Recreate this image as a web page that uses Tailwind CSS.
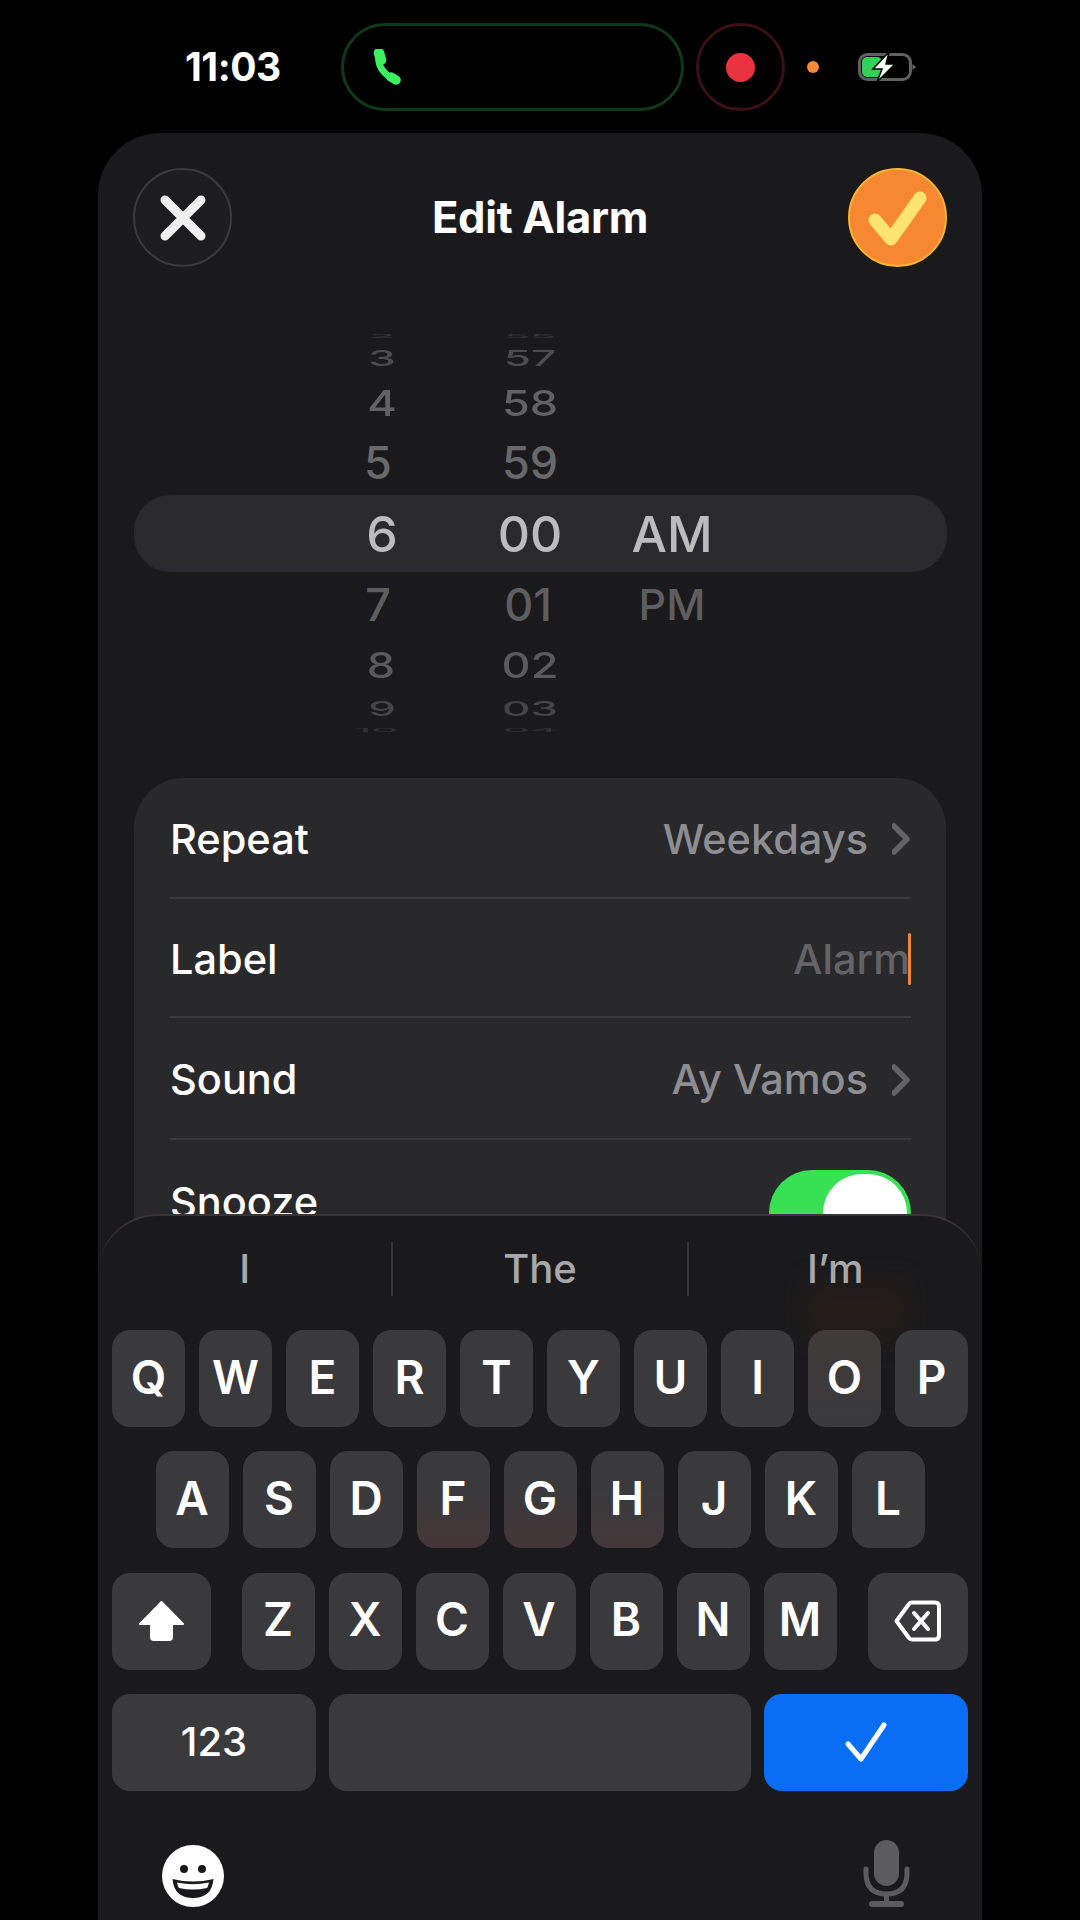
<!DOCTYPE html>
<html><head><meta charset="utf-8"><script src="https://cdn.jsdelivr.net/npm/@tailwindcss/browser@4"></script></head>
<body class="bg-black">
<div class="w-[1080px] h-[1920px] bg-black overflow-hidden flex flex-col font-[Inter,sans-serif] text-white">
  <!-- status bar -->
  <div class="h-[133px] shrink-0 flex items-start pt-[23px] pl-[185px]">
    <div class="w-[156px] h-[88px] flex items-center text-[39px] font-bold tracking-[-0.5px]">11:03</div>
    <div class="w-[343px] h-[88px] rounded-full border-[3px] border-[#0f3a18] flex items-center pl-[29px]">
      <svg width="28" height="36" viewBox="0 0 28 36"><path d="M6 4 C4 14 8 24 22 31" fill="none" stroke="#3cf060" stroke-width="6.500" stroke-linecap="round"/><path d="M6 4 L8 11" stroke="#3cf060" stroke-width="10.500" stroke-linecap="round"/><path d="M18 28 L23 31" stroke="#3cf060" stroke-width="9.500" stroke-linecap="round"/></svg>
    </div>
    <div class="ml-[12px] w-[89px] h-[88px] rounded-full border-[3px] border-[#3a1014] flex items-center justify-center"><div class="w-[29px] h-[29px] rounded-full bg-[#ea3340]"></div></div>
    <div class="ml-[22px] mt-[38px] w-[12px] h-[12px] rounded-full bg-[#f5883a]"></div>
    <svg class="ml-[39px] mt-[29px]" width="58" height="30" viewBox="0 0 58 30">
      <rect x="1.500" y="2.500" width="51" height="25" rx="8" fill="none" stroke="#606062" stroke-width="3"/>
      <rect x="4" y="5" width="20" height="20" rx="5" fill="#35d058"/>
      <path d="M54.500 12 L58 15 L54.500 18 Z" fill="#68686a"/>
      <path d="M31 0 L15 17 H24 L19 30 L37 12 H28 Z" fill="#fff" stroke="#000" stroke-width="1.500"/>
    </svg>
  </div>

  <!-- sheet -->
  <div class="relative flex-1 mx-[98px] w-[884px] bg-[#1a1a1c] rounded-t-[62px] overflow-hidden flex flex-col">
    <div class="flex items-center justify-between px-[35px] pt-[35px] shrink-0">
      <div class="w-[99px] h-[99px] rounded-full bg-[#1d1d1f] border-2 border-[#3a3a3d] flex items-center justify-center">
        <svg width="48" height="48" viewBox="0 0 48 48"><path d="M6 6 L42 42 M42 6 L6 42" stroke="#efefef" stroke-width="9" stroke-linecap="round"/></svg>
      </div>
      <div class="text-[43.500px] font-bold tracking-[-0.3px]">Edit Alarm</div>
      <div class="w-[99px] h-[99px] rounded-full bg-[#f58830] border-2 border-[#f5b52f] flex items-center justify-center">
        <svg class="shrink-0" width="99" height="99" viewBox="0 0 99 99"><path d="M27 52 L43 71 L72 30" fill="none" stroke="#fde36f" stroke-width="13" stroke-linecap="round" stroke-linejoin="round"/></svg>
      </div>
    </div>

    <!-- picker -->
    <div class="relative mt-[58px] shrink-0 h-[416px] flex flex-col font-medium">
      <div class="absolute left-[36px] right-[35px] top-[170px] h-[77px] rounded-[36px] bg-[#2a2a2e]"></div>
      <div class="relative h-[22px] flex items-center pl-[224px] text-[42px] leading-none text-[#343436]"><div class="w-[120px] text-center"><span class="inline-block scale-y-[.13]">2</span></div><div class="w-[176px] text-center"><span class="inline-block scale-y-[.13]">55</span></div></div>
      <div class="relative h-[22px] flex items-center pl-[224px] text-[44px] leading-none text-[#4c4c4e]"><div class="w-[120px] text-center"><span class="inline-block scale-y-[.5]">3</span></div><div class="w-[176px] text-center"><span class="inline-block scale-y-[.5]">57</span></div></div>
      <div class="relative h-[66px] flex items-center pl-[224px] text-[45px] leading-none text-[#626264]"><div class="w-[120px] text-center"><span class="inline-block scale-y-[.8]">4</span></div><div class="w-[176px] text-center"><span class="inline-block scale-y-[.8]">58</span></div></div>
      <div class="relative h-[54px] flex items-center pl-[224px] text-[45px] leading-none text-[#68686a]"><div class="w-[120px] pr-[8px] text-center"><span class="inline-block">5</span></div><div class="w-[176px] text-center"><span class="inline-block">59</span></div></div>
      <div class="relative h-[86px] flex items-center pl-[224px] pt-[3px] text-[50px] leading-none text-[#bcbcbe]"><div class="w-[120px] text-center"><span class="inline-block">6</span></div><div class="w-[176px] text-center"><span class="inline-block">00</span></div><div class="w-[108px] text-center"><span class="inline-block">AM</span></div></div>
      <div class="relative h-[58px] flex items-center pl-[224px] text-[45px] leading-none text-[#5e5e60]"><div class="w-[120px] pr-[8px] text-center"><span class="inline-block">7</span></div><div class="w-[176px] text-center pr-[4px]"><span class="inline-block">01</span></div><div class="w-[108px] text-center text-[43px]"><span class="inline-block">PM</span></div></div>
      <div class="relative h-[64px] flex items-center pl-[224px] text-[45px] leading-none text-[#5a5a5c]"><div class="w-[120px] pr-[2px] text-center"><span class="inline-block scale-y-[.78]">8</span></div><div class="w-[176px] text-center"><span class="inline-block scale-y-[.78]">02</span></div></div>
      <div class="relative h-[22px] flex items-center pl-[224px] text-[44px] leading-none text-[#454547]"><div class="w-[120px] text-center"><span class="inline-block scale-y-[.47]">9</span></div><div class="w-[176px] text-center"><span class="inline-block scale-y-[.47]">03</span></div></div>
      <div class="relative h-[22px] flex items-center pl-[224px] text-[42px] leading-none text-[#303032]"><div class="w-[120px] pr-[12px] text-center"><span class="inline-block scale-y-[.13]">10</span></div><div class="w-[176px] text-center"><span class="inline-block scale-y-[.13]">04</span></div></div>
    </div>

    <!-- settings card -->
    <div class="mt-[37px] mx-[36px] shrink-0 h-[600px] bg-[#29292c] rounded-[50px] pl-[36px] pr-[35px] text-[41.500px] font-medium flex flex-col">
      <div class="h-[121px] pt-[3px] shrink-0 flex items-center justify-between border-b-2 border-[#3a3a3d]">
        <span>Repeat</span>
        <span class="flex items-center gap-[24px] text-[#8e8e92]">Weekdays
          <svg width="19" height="32" viewBox="0 0 19 32"><path d="M2 3 L15 16 L2 29" fill="none" stroke="#636366" stroke-width="5.500" stroke-linecap="round" stroke-linejoin="round"/></svg>
        </span>
      </div>
      <div class="h-[119px] pt-[3px] shrink-0 flex items-center justify-between border-b-2 border-[#3a3a3d]">
        <span>Label</span>
        <span class="flex items-center text-[#636366]">Alarm<span class="-ml-[2px] w-[3px] h-[52px] rounded-full bg-[#f5862e]"></span></span>
      </div>
      <div class="h-[122px] pt-[3px] shrink-0 flex items-center justify-between border-b-2 border-[#3a3a3d]">
        <span>Sound</span>
        <span class="flex items-center gap-[24px] text-[#8e8e92]">Ay Vamos
          <svg width="19" height="32" viewBox="0 0 19 32"><path d="M2 3 L15 16 L2 29" fill="none" stroke="#636366" stroke-width="5.500" stroke-linecap="round" stroke-linejoin="round"/></svg>
        </span>
      </div>
      <div class="h-[124px] shrink-0 flex items-center justify-between">
        <span>Snooze</span>
        <div class="relative self-start mt-[30px] w-[142px] h-[86px] rounded-full bg-[#38e154]"><div class="absolute top-[4px] right-[4px] w-[84px] h-[78px] rounded-full bg-white"></div></div>
      </div>
    </div>

    <!-- keyboard -->
    <div class="absolute left-0 right-0 bottom-0 h-[706px] bg-[#1a1a1c] rounded-t-[60px] border-t-2 border-[#3a3534] overflow-hidden">
      <div class="absolute left-[704px] top-[66px] w-[108px] h-[54px] bg-[#3a2414]/30 blur-[12px]"></div>
      <div class="relative flex h-[54px] mt-[26px] text-[40px] text-[#a8a8aa] font-medium">
        <div class="flex-1 flex items-center justify-center border-r-2 border-[#333335]">I</div>
        <div class="flex-1 flex items-center justify-center border-r-2 border-[#333335]">The</div>
        <div class="flex-1 flex items-center justify-center">I’m</div>
      </div>
      <div class="relative mt-[34px] px-[14px] flex flex-col gap-[24.300px] text-[46px] font-semibold">
        <div class="flex justify-between h-[97px] [&>div]:pb-[3px]">
          <div class="w-[73px] rounded-[18px] bg-[#3a3a3c] flex items-center justify-center">Q</div>
          <div class="w-[73px] rounded-[18px] bg-[#3a3a3c] flex items-center justify-center">W</div>
          <div class="w-[73px] rounded-[18px] bg-[#3a3a3c] flex items-center justify-center">E</div>
          <div class="w-[73px] rounded-[18px] bg-[#3a3a3c] flex items-center justify-center">R</div>
          <div class="w-[73px] rounded-[18px] bg-[#3a3a3c] flex items-center justify-center">T</div>
          <div class="w-[73px] rounded-[18px] bg-[#3a3a3c] flex items-center justify-center">Y</div>
          <div class="w-[73px] rounded-[18px] bg-[#3a3a3c] flex items-center justify-center">U</div>
          <div class="w-[73px] rounded-[18px] bg-[#3a3a3c] flex items-center justify-center">I</div>
          <div class="w-[73px] rounded-[18px] bg-gradient-to-b from-[#403a3a] to-[#3a3a3c] flex items-center justify-center">O</div>
          <div class="w-[73px] rounded-[18px] bg-[#3a3a3c] flex items-center justify-center">P</div>
        </div>
        <div class="flex justify-center gap-[14px] h-[97px] [&>div]:pb-[3px]">
          <div class="w-[73px] rounded-[18px] bg-[#3a3a3c] flex items-center justify-center">A</div>
          <div class="w-[73px] rounded-[18px] bg-[#3a3a3c] flex items-center justify-center">S</div>
          <div class="w-[73px] rounded-[18px] bg-[#3a3a3c] flex items-center justify-center">D</div>
          <div class="w-[73px] rounded-[18px] bg-gradient-to-b from-[#3a3a3c] from-40% to-[#453638] flex items-center justify-center">F</div>
          <div class="w-[73px] rounded-[18px] bg-gradient-to-b from-[#3a3a3c] from-40% to-[#433638] flex items-center justify-center">G</div>
          <div class="w-[73px] rounded-[18px] bg-gradient-to-b from-[#3a3a3c] from-40% to-[#43383a] flex items-center justify-center">H</div>
          <div class="w-[73px] rounded-[18px] bg-[#3a3a3c] flex items-center justify-center">J</div>
          <div class="w-[73px] rounded-[18px] bg-[#3a3a3c] flex items-center justify-center">K</div>
          <div class="w-[73px] rounded-[18px] bg-[#3a3a3c] flex items-center justify-center">L</div>
        </div>
        <div class="flex justify-between h-[97px]">
          <div class="w-[99px] rounded-[18px] bg-[#3a3a3c] flex items-center justify-center">
            <svg width="47" height="42" viewBox="0 0 47 42"><path d="M23.500 2 L45 24 H34 V37 Q34 40 31 40 H16 Q13 40 13 37 V24 H2 Z" fill="#fff" stroke="#fff" stroke-width="2" stroke-linejoin="round"/></svg>
          </div>
          <div class="flex gap-[14px] -ml-[1px] [&>div]:pb-[3px]">
            <div class="w-[73px] rounded-[18px] bg-[#3a3a3c] flex items-center justify-center">Z</div>
            <div class="w-[73px] rounded-[18px] bg-[#3a3a3c] flex items-center justify-center">X</div>
            <div class="w-[73px] rounded-[18px] bg-[#3a3a3c] flex items-center justify-center">C</div>
            <div class="w-[73px] rounded-[18px] bg-[#3a3a3c] flex items-center justify-center">V</div>
            <div class="w-[73px] rounded-[18px] bg-[#3a3a3c] flex items-center justify-center">B</div>
            <div class="w-[73px] rounded-[18px] bg-[#3a3a3c] flex items-center justify-center">N</div>
            <div class="w-[73px] rounded-[18px] bg-[#3a3a3c] flex items-center justify-center">M</div>
          </div>
          <div class="w-[100px] rounded-[18px] bg-[#3a3a3c] flex items-center justify-center">
            <svg width="48" height="42" viewBox="0 0 48 42"><path d="M2.500 21 L15 4 Q16 2.500 18 2.500 H41 Q45 2.500 45 6.500 V35.500 Q45 39.500 41 39.500 H18 Q16 39.500 15 38 Z" fill="none" stroke="#fff" stroke-width="4" stroke-linejoin="round"/><path d="M20 13 L34 29 M34 13 L20 29" stroke="#fff" stroke-width="4" stroke-linecap="round"/></svg>
          </div>
        </div>
        <div class="flex gap-[13px] h-[97px]">
          <div class="w-[204px] rounded-[18px] bg-[#3a3a3c] flex items-center justify-center text-[40px] font-medium">123</div>
          <div class="flex-1 rounded-[18px] bg-[#3a3a3c]"></div>
          <div class="w-[204px] rounded-[18px] bg-[#0a6ef5] flex items-center justify-center">
            <svg width="44" height="42" viewBox="0 0 44 42"><path d="M4 23 L17 38 L40 4" fill="none" stroke="#fff" stroke-width="5" stroke-linecap="round" stroke-linejoin="round"/></svg>
          </div>
        </div>
      </div>
      <div class="relative mt-[49px] pl-[64px] pr-[72px] flex justify-between items-end">
        <svg width="62" height="62" viewBox="0 0 62 62"><circle cx="31" cy="31" r="31" fill="#fff"/><circle cx="22" cy="24" r="4" fill="#1a1a1c"/><circle cx="40" cy="24" r="4" fill="#1a1a1c"/><path d="M10.500 34 Q31 39 51.500 34 Q50 53 31 53 Q12 53 10.500 34 Z" fill="#1a1a1c"/><path d="M15 37.500 Q31 41 47 37.500 Q46 42 45 43 Q31 46 17 43 Q16 42 15 37.500 Z" fill="#fff"/></svg>
        <svg width="47" height="67" viewBox="0 0 47 67"><rect x="11" y="0" width="25" height="46" rx="12.500" fill="#5c5c5e"/><path d="M3 29 V33 Q3 54 23.500 54 Q44 54 44 33 V29" fill="none" stroke="#5c5c5e" stroke-width="5" stroke-linecap="round"/><path d="M23.500 54 V63" stroke="#5c5c5e" stroke-width="5"/><path d="M9 64 H38" stroke="#5c5c5e" stroke-width="6" stroke-linecap="round"/></svg>
      </div>
    </div>
  </div>
</div>
</body></html>
